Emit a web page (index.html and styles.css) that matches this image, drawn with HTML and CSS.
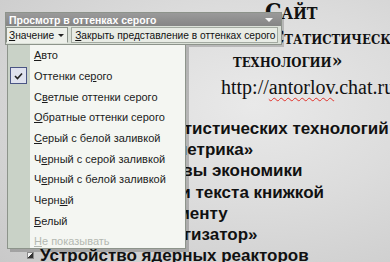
FILE: index.html
```html
<!DOCTYPE html>
<html lang="ru">
<head>
    <meta charset="UTF-8">
    <meta name="viewport" content="width=device-width, initial-scale=1.0">
    <title>Просмотр в оттенках серого</title>
    <link rel="stylesheet" href="styles.css">
</head>
<body>

    <div class="slide">
        <div class="slide-title">
            <div class="line-1">Сайт</div>
            <div class="line-2">«Статистические</div>
            <div class="line-3">технологии»</div>
        </div>
        <div class="slide-url">http://<span class="misspelled">antorlov</span>.chat.ru</div>
        <ul class="topics">
            <li>Лаборатория статистических технологий</li>
            <li>Учебник «Эконометрика»</li>
            <li>Конспекты: основы экономики</li>
            <li>Настройка печати текста книжкой</li>
            <li>Курс по эксперименту</li>
            <li>Система «Стратегизатор»</li>
            <li>Устройство ядерных реакторов</li>
        </ul>
    </div>

    <div class="gs-panel">
        <div class="gs-title">
            <span>Просмотр в оттенках серого</span>
            <span class="gs-arrow"></span>
        </div>
        <div class="gs-bar">
            <div class="gs-btn gs-btn-open"><u>З</u>начение<span class="caret"></span></div>
            <div class="gs-btn"><u>З</u>акрыть представление в оттенках серого</div>
        </div>
    </div>

    <div class="gs-menu">
        <div class="gs-item"><span class="gs-icon"></span><span><u>А</u>вто</span></div>
        <div class="gs-item">
            <span class="gs-icon checked">
                <svg width="9" height="8" viewBox="0 0 9 8"><path d="M1 4 L3.5 6.5 L8 1.5" fill="none" stroke="#222" stroke-width="1.6"/></svg>
            </span>
            <span>Оттенки се<u>р</u>ого</span>
        </div>
        <div class="gs-item"><span class="gs-icon"></span><span>С<u>в</u>етлые оттенки серого</span></div>
        <div class="gs-item"><span class="gs-icon"></span><span><u>О</u>братные оттенки серого</span></div>
        <div class="gs-item"><span class="gs-icon"></span><span><u>С</u>ерый с белой заливкой</span></div>
        <div class="gs-item"><span class="gs-icon"></span><span>Ч<u>е</u>рный с серой заливкой</span></div>
        <div class="gs-item"><span class="gs-icon"></span><span>Ч<u>е</u>рный с белой заливкой</span></div>
        <div class="gs-item"><span class="gs-icon"></span><span>Черн<u>ы</u>й</span></div>
        <div class="gs-item"><span class="gs-icon"></span><span><u>Б</u>елый</span></div>
        <div class="gs-item disabled"><span class="gs-icon"></span><span><u>Н</u>е показывать</span></div>
    </div>

</body>
</html>
```

FILE: styles.css
```css
body {
    margin: 0;
    padding: 0;
    font-family: 'Liberation Sans', Arial, sans-serif;
}

.slide {
    position: relative;
    width: 390px;
    height: 262px;
    overflow: hidden;
    background: radial-gradient(ellipse at 65% 40%, #e9e9e9 0%, #dcdcdc 45%, #c9c9c9 100%);
    color: #111;
}

.slide-title {
    font-family: 'DejaVu Serif Condensed', 'DejaVu Serif', serif;
    font-weight: bold;
    font-variant: small-caps;
    font-size: 19px;
    line-height: 23px;
    white-space: nowrap;
}
.line-1 {
    font-size: 23px;
    line-height: 24px;
    margin-top: -1px;
    padding-left: 265px;
}
.line-2 {
    margin-top: 3px;
    padding-left: 260px;
}
.line-3 {
    padding-left: 233px;
}

.slide-url {
    font-family: 'Liberation Serif', 'Times New Roman', serif;
    font-size: 20px;
    line-height: 24px;
    margin-top: 3px;
    padding-left: 221px;
    white-space: nowrap;
}
.misspelled {
    text-decoration: underline wavy #e0302a;
    text-decoration-thickness: 1px;
    text-underline-offset: 3px;
}

.topics {
    list-style: none;
    margin: 19px 0 0;
    padding: 0 0 0 27px;
    font-weight: bold;
    font-size: 17px;
    line-height: 21.2px;
    white-space: nowrap;
}
.topics li {
    display: flex;
    align-items: center;
    gap: 6px;
}
.topics li::before {
    content: '';
    flex: none;
    width: 5px;
    height: 5px;
    border: 1px solid #8a8a8a;
    background: linear-gradient(135deg, #f2f2f2 50%, #333 50%);
}

/* grayscale toolbar */
.gs-panel {
    position: absolute;
    left: 5px;
    top: 12px;
    width: 275px;
    border: 1px solid #8d938b;
    box-shadow: 2px 2px 0 rgba(0, 0, 0, 0.18);
}
.gs-title {
    display: flex;
    align-items: center;
    justify-content: space-between;
    height: 13px;
    padding: 0 8px 0 3px;
    background: linear-gradient(#9a9a9a, #858585);
    color: #fff;
    font-weight: bold;
    font-size: 10.5px;
}
.gs-arrow {
    width: 0;
    height: 0;
    border-left: 4px solid transparent;
    border-right: 4px solid transparent;
    border-top: 4px solid #f4f4f4;
}
.gs-bar {
    display: flex;
    align-items: center;
    gap: 3px;
    height: 18px;
    background: #dbe1d8;
    font-size: 10.2px;
}
.gs-btn {
    display: flex;
    align-items: center;
    height: 14px;
    padding: 0 2px 0 3px;
    border: 1px solid #a3aaa1;
    background: #e8ece5;
    color: #111;
    white-space: nowrap;
}
.gs-btn-open {
    background: #edf0ea;
    border-color: #8b928a;
    border-bottom-color: transparent;
    padding: 0 3px 0 2px;
}
.caret {
    margin-left: 4px;
    width: 0;
    height: 0;
    border-left: 3px solid transparent;
    border-right: 3px solid transparent;
    border-top: 3px solid #222;
}

.gs-menu {
    position: absolute;
    left: 7px;
    top: 44px;
    width: 177px;
    height: 203px;
    overflow: hidden;
    border: 1px solid #8d948b;
    background: linear-gradient(to right, #c9d2c7 22px, #f4f6f2 22px);
    box-shadow: 3px 3px 0 rgba(0, 0, 0, 0.2);
    font-size: 11px;
    color: #1b1b1b;
}
.gs-item {
    display: flex;
    align-items: center;
    height: 20.67px;
    gap: 7px;
}
.gs-icon {
    flex: none;
    display: flex;
    align-items: center;
    justify-content: center;
    width: 17px;
    height: 17px;
    margin-left: 2px;
    box-sizing: border-box;
}
.gs-icon.checked {
    border: 1px solid #4a5584;
    background: #dfe2ee;
}
.gs-item.disabled {
    color: #b3b8b1;
}
u {
    text-decoration-thickness: 1px;
    text-underline-offset: 1px;
}
```
